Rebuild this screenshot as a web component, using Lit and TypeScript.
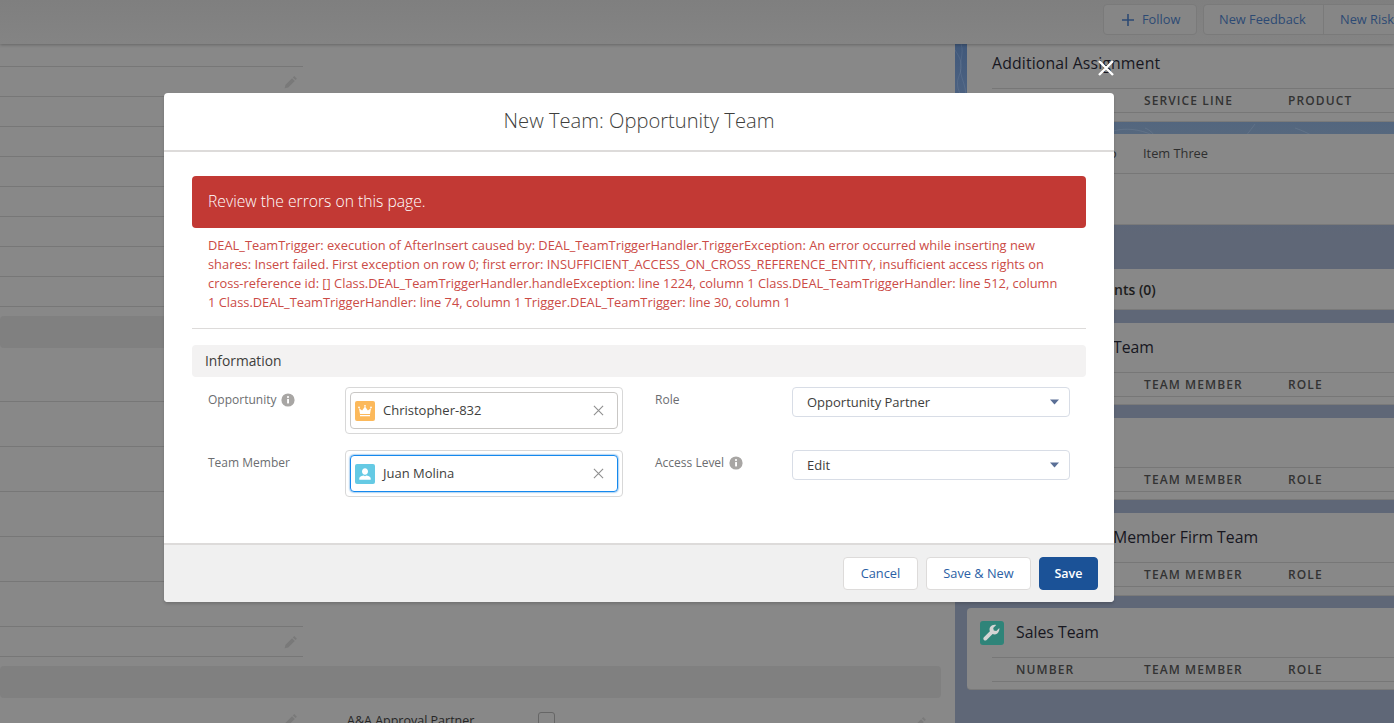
import { LitElement, html, css, svg } from "lit";
import { customElement } from "lit/decorators.js";

const pencil = svg`<svg class="pencil" viewBox="0 0 14 14"><path d="M10.2 1.1l2.7 2.7-1.3 1.3-2.7-2.7zM8.1 3.2l2.7 2.7-6.6 6.6L.7 13.3l.8-3.5z" fill="currentColor"/></svg>`;
const info = svg`<svg class="info" viewBox="0 0 14 14"><circle cx="7" cy="7" r="6.6" fill="#a8a6a4"/><rect x="6.1" y="5.9" width="1.9" height="4.6" rx=".4" fill="#fff"/><circle cx="7" cy="4.1" r="1.05" fill="#fff"/></svg>`;
const crown = svg`<svg viewBox="0 0 20 20" class="obj"><rect width="20" height="20" rx="2" fill="#fcb95b"/><path d="M4 7.2l3.1 2.4L10 5.6l2.9 4 3.1-2.4-1 5.8H5zM5 14h10v1.3H5z" fill="#fff"/><circle cx="4" cy="6.4" r=".9" fill="#fff"/><circle cx="10" cy="4.8" r=".9" fill="#fff"/><circle cx="16" cy="6.4" r=".9" fill="#fff"/></svg>`;
const person = svg`<svg viewBox="0 0 20 20" class="obj"><rect width="20" height="20" rx="2" fill="#65cae4"/><path d="M10 4.2c1.8 0 3 1.400 3 3.200s-1.200 3.300-3 3.300-3-1.500-3-3.300 1.200-3.200 3-3.200zM4.300 15.800v-1.300c0-1 .7-1.700 1.700-2.200 1-.5 1.900-.7 2.600-.9l1.400.8 1.400-.8c.7.200 1.600.4 2.600.9 1 .5 1.700 1.200 1.700 2.200v1.300z" fill="#fff"/></svg>`;
const wrench = svg`<svg viewBox="0 0 24 24" class="wrench"><rect width="24" height="24" rx="3" fill="#2f8479"/><path d="M19.300 7.100l-3 3-2.500-.6-.6-2.500 3-3c-2.200-.6-4.600 0-5.800 1.800-1 1.400-1.100 3.100-.5 4.500l-6 6c-.8.800-.8 2 0 2.700.8.800 2 .8 2.700 0l6-6c1.500.7 3.300.5 4.700-.6 1.700-1.300 2.300-3.500 2-5.300z" fill="#d4d4d4"/></svg>`;
const caret = svg`<svg class="caret" viewBox="0 0 9 6"><path d="M0 .4h9L4.500 5.600z" fill="#5a6f96"/></svg>`;
const clear = svg`<svg class="clear" viewBox="0 0 12 12"><path d="M1 1l10 10M11 1L1 11" stroke="#8f8f8f" stroke-width="1.200" fill="none"/></svg>`;

@customElement("app-root")
export class AppRoot extends LitElement {
  static styles = css`
    :host { display: block; position: relative; width: 1394px; height: 723px; overflow: hidden; font-family: "Open Sans", "Liberation Sans", sans-serif; }
    * { box-sizing: border-box; }
    .page { display: grid; grid-template-columns: 955px 439px; grid-template-rows: 44px 679px; width: 1394px; height: 723px; background: #888; }
    .top { grid-column: 1 / 3; display: flex; align-items: flex-start; padding: 4px 0 0 1103px; gap: 6px; background: linear-gradient(#7f7f7f, #848484); box-shadow: 0 1px 3px rgba(0,0,0,.25); position: relative; z-index: 1; overflow: hidden; }
    .tbtn { height: 31px; display: flex; align-items: center; background: #868686; border: 1px solid #7a7a7a; color: #2d4a74; font-size: 12.800px; white-space: nowrap; border-radius: 4px; flex: none; padding-bottom: 2px; }
    .follow { width: 94px; padding-left: 17px; gap: 7px; }
    .follow svg { width: 14px; height: 14px; margin-top: 2px; }
    .group { display: flex; width: 300px; flex: none; }
    .group .tbtn:first-child { width: 121px; padding-left: 15px; border-radius: 4px 0 0 4px; }
    .group .tbtn:last-child { flex: 1; padding-left: 16px; border-left: 1px solid #7a7a7a; margin-left: -1px; border-radius: 0; }
    .main { display: flex; flex-direction: column; }
    .row { height: 30px; width: 303px; border-bottom: 1px solid #777; flex: none; display: flex; align-items: center; justify-content: flex-end; padding-right: 5px; color: #797979; }
    .first { height: 23px; }
    .tall { height: 45px; }
    .taller { height: 54px; }
    .pencil { width: 14px; height: 14px; }
    .band { flex: none; height: 32px; width: 941px; margin-top: 9px; background: #808080; border-radius: 4px; }
    .bottom { display: flex; align-items: flex-start; margin-top: 15px; }
    .bottom .cell { width: 303px; flex: none; display: flex; justify-content: flex-end; padding: 0 5px 0 0; color: #797979; }
    .aa { margin: 1px 0 0 44px; width: 191px; font-size: 12.500px; color: #262626; line-height: 14px; flex: none; }
    .check { width: 17px; height: 17px; border: 1px solid #666; border-radius: 3px; flex: none; margin-top: -1px; }
    .bottom .edit { margin-left: 358px; color: #7a7a7a; }
    .side {
      display: flex; flex-direction: column; padding-left: 12px;
      background:
        url("data:image/svg+xml,%3Csvg xmlns='http://www.w3.org/2000/svg' width='439' height='130'%3E%3Cg fill='none' stroke='%23fff' stroke-opacity='.07'%3E%3Cpath d='M0 6c5 8 9 14 4 26s3 20 8 30-5 22 1 34'/%3E%3Cpath d='M6 0c4 10-4 20 1 34s6 24 0 38'/%3E%3Cpath d='M150 90c30-14 60 6 70 16s30 6 50-4M190 84c14 6 10 18 30 24M300 80c-10 14-20 24-30 40M340 84c30 10 40 30 70 26'/%3E%3C/g%3E%3C/svg%3E") no-repeat,
        linear-gradient(#40587a 0, #4a6080 40px, #56687e 90px, #5f6777 190px);
    }
    .card { background: #888; border-radius: 4px 0 0 4px; border-bottom: 1px solid #7a7a7a; flex: none; display: flex; flex-direction: column; padding-left: 25px; margin-bottom: 13px; height: 82px; }
    .h78 { height: 78px; margin-bottom: 12px; border-radius: 0; }
    .h91 { height: 91px; margin-bottom: 44px; }
    .h41 { height: 41px; }
    .h83 { height: 83px; margin-bottom: 12px; }
    .title { height: 49px; display: flex; align-items: center; font-size: 15.800px; color: #17171f; white-space: nowrap; flex: none; padding-bottom: 2px; }
    .h78 .title { height: 44px; padding-bottom: 7px; letter-spacing: .15px; }
    .indent { padding-left: 121px; }
    .title.nts { height: 41px; padding: 0 0 0 122px; font-size: 14px; font-weight: 600; color: #1c1c1c; }
    .thead { display: grid; grid-template-columns: 24px 128px 144px 1fr; align-items: center; height: 25px; border-top: 1px solid #777; border-bottom: 1px solid #777; font-size: 12px; font-weight: 600; letter-spacing: 1.100px; color: #333; flex: none; }
    .thead span:first-child { grid-column: 2; }
    .thead .c2 { grid-column: 3; }
    .thead .c3 { grid-column: 4; }
    .wrench { width: 24px; height: 24px; flex: none; margin-top: 2px; }
    .tb { padding-left: 0; }
    .tb .sales { padding-left: 13px; gap: 12px; }
    .tb .thead { margin-left: 25px; }
    .tr { height: 40px; display: flex; align-items: flex-end; padding: 0 0 11px 151px; font-size: 12.800px; color: #2f2f2f; border-bottom: 1px solid #777; flex: none; }
    .o { margin-left: -34px; width: 34px; }

    .backdrop { position: absolute; inset: 0; padding: 93px 0 0 164px; }
    .close { position: absolute; left: 1097px; top: 59px; width: 18px; height: 18px; }
    .modal { width: 950px; height: 509px; background: #fff; border-radius: 4px; display: flex; flex-direction: column; box-shadow: 0 2px 3px rgba(0,0,0,.16); overflow: hidden; position: relative; z-index: 0; }
    .mhead { height: 59px; flex: none; border-bottom: 2px solid #dddbda; display: flex; align-items: center; justify-content: center; font-size: 20.150px; font-weight: 300; color: #3e3e3c; padding-bottom: 3px; }
    .mbody { flex: 1; padding: 24px 28px 0; }
    .err { height: 52px; background: #c23934; border-radius: 4px; color: #fff; display: flex; align-items: center; padding: 0 0 2px 16px; font-size: 15.700px; font-weight: 300; }
    .msg { margin: 8px 0 0; padding: 0 20px 0 16px; font-size: 12.850px; line-height: 19px; color: #cb4b46; height: 76px; }
    .hr { height: 1px; background: #dddbda; margin-top: 16px; }
    .sect { height: 32px; margin-top: 16px; background: #f3f2f2; border-radius: 4px; display: flex; align-items: center; padding: 0 0 2px 13px; font-size: 13.800px; color: #3e3e3c; }
    .form { display: grid; grid-template-columns: 137px 278px 169px 278px; row-gap: 16px; margin-top: 10px; padding-left: 16px; }
    .form .lab { font-size: 12px; color: #6b6d70; display: flex; align-items: flex-start; gap: 5px; padding-top: 4px; height: 47px; line-height: 17px; }
    .form .lab2 { margin-left: 32px; }
    .info { width: 14px; height: 14px; margin-top: 2px; }
    .look { width: 278px; height: 47px; border: 1px solid #d8d8d8; border-radius: 4px; padding: 4px; }
    .pill { height: 37px; border: 1px solid #c9c7c5; border-radius: 4px; display: flex; align-items: center; padding: 0 0 0 4px; font-size: 13px; line-height: 16px; color: #3e3e3c; gap: 8px; }
    .pill span { margin-top: -2px; }
    .focus { border-color: #1589ee; box-shadow: 0 0 2px #0070d2; }
    .obj { width: 20px; height: 20px; flex: none; }
    .clear { width: 11px; height: 11px; margin-left: auto; margin-right: 13px; }
    .sel { width: 278px; height: 30px; border: 1px solid #d8dde6; border-radius: 4px; display: flex; align-items: center; padding: 0 10px 0 14px; font-size: 13px; color: #3e3e3c; }
    .caret { width: 9px; height: 6px; margin-left: auto; }
    .mfoot { height: 59px; flex: none; border-top: 2px solid #dddbda; background: #f0f0f0; display: flex; align-items: flex-start; padding: 12px 16px 0 0; justify-content: flex-end; }
    .btn { height: 33px; border: 1px solid #dddbda; background: #fff; border-radius: 4px; font-size: 12.800px; color: #2b5fa5; display: flex; align-items: center; justify-content: center; padding-bottom: 1px; }
    .cancel { width: 75px; margin-right: 8px; }
    .sn { width: 105px; margin-right: 8px; }
    .save { width: 59px; background: #1b5297; border-color: #1b5297; color: #fff; font-size: 12.500px; font-weight: 600; }
  `;

  render() {
    const plain = (n: number) => Array.from({ length: n }, () => html`<div class="row"></div>`);
    const tall = (n: number) => Array.from({ length: n }, () => html`<div class="row tall"></div>`);
    const head = (a: string, b: string, c: string) => html`<div class="thead"><span>${a}</span><span class="c2">${b}</span><span class="c3">${c}</span></div>`;
    return html`
      <div class="page">
        <div class="top">
          <div class="tbtn follow"><svg viewBox="0 0 14 14"><path d="M7 1v12M1 7h12" stroke="#2d4a74" stroke-width="1.600"/></svg>Follow</div>
          <div class="group"><div class="tbtn">New Feedback</div><div class="tbtn">New Risk</div></div>
        </div>
        <div class="main">
          <div class="row first"></div>
          <div class="row">${pencil}</div>
          ${plain(7)}
          <div class="band"></div>
          <div class="row taller"></div>
          ${tall(5)}
          <div class="row">${pencil}</div>
          <div class="band"></div>
          <div class="bottom">
            <div class="cell">${pencil}</div>
            <div class="aa">A&amp;A Approval Partner</div>
            <div class="check"></div>
            <div class="edit">${pencil}</div>
          </div>
        </div>
        <div class="side">
          <div class="card h78"><div class="title">Additional Assignment</div>${head("", "SERVICE LINE", "PRODUCT")}</div>
          <div class="card h91"><div class="tr"><span class="o">o</span><span>Item Three</span></div></div>
          <div class="card h41"><div class="title nts">nts (0)</div></div>
          <div class="card"><div class="title indent">Team</div>${head("", "TEAM MEMBER", "ROLE")}</div>
          <div class="card"><div class="title"></div>${head("", "TEAM MEMBER", "ROLE")}</div>
          <div class="card h83"><div class="title indent">Member Firm Team</div>${head("", "TEAM MEMBER", "ROLE")}</div>
          <div class="card tb"><div class="title sales">${wrench}Sales Team</div>${head("NUMBER", "TEAM MEMBER", "ROLE")}</div>
        </div>
      </div>

      <div class="backdrop">
        <div class="modal">
          <div class="mhead">New Team: Opportunity Team</div>
          <div class="mbody">
            <div class="err">Review the errors on this page.</div>
            <p class="msg">DEAL_TeamTrigger: execution of AfterInsert caused by: DEAL_TeamTriggerHandler.TriggerException: An error occurred while inserting new shares: Insert failed. First exception on row 0; first error: INSUFFICIENT_ACCESS_ON_CROSS_REFERENCE_ENTITY, insufficient access rights on cross-reference id: [] Class.DEAL_TeamTriggerHandler.handleException: line 1224, column 1 Class.DEAL_TeamTriggerHandler: line 512, column 1 Class.DEAL_TeamTriggerHandler: line 74, column 1 Trigger.DEAL_TeamTrigger: line 30, column 1</p>
            <div class="hr"></div>
            <div class="sect">Information</div>
            <div class="form">
              <div class="lab">Opportunity ${info}</div>
              <div class="look"><div class="pill">${crown}<span>Christopher-832</span>${clear}</div></div>
              <div class="lab lab2">Role</div>
              <div class="sel">Opportunity Partner${caret}</div>
              <div class="lab">Team Member</div>
              <div class="look"><div class="pill focus">${person}<span>Juan Molina</span>${clear}</div></div>
              <div class="lab lab2">Access Level ${info}</div>
              <div class="sel">Edit${caret}</div>
            </div>
          </div>
          <div class="mfoot">
            <div class="btn cancel">Cancel</div>
            <div class="btn sn">Save &amp; New</div>
            <div class="btn save">Save</div>
          </div>
        </div>
        <svg class="close" viewBox="0 0 18 18"><path d="M2 2l14 14M16 2L2 16" stroke="#fff" stroke-width="2.400"/></svg>
      </div>
    `;
  }
}
